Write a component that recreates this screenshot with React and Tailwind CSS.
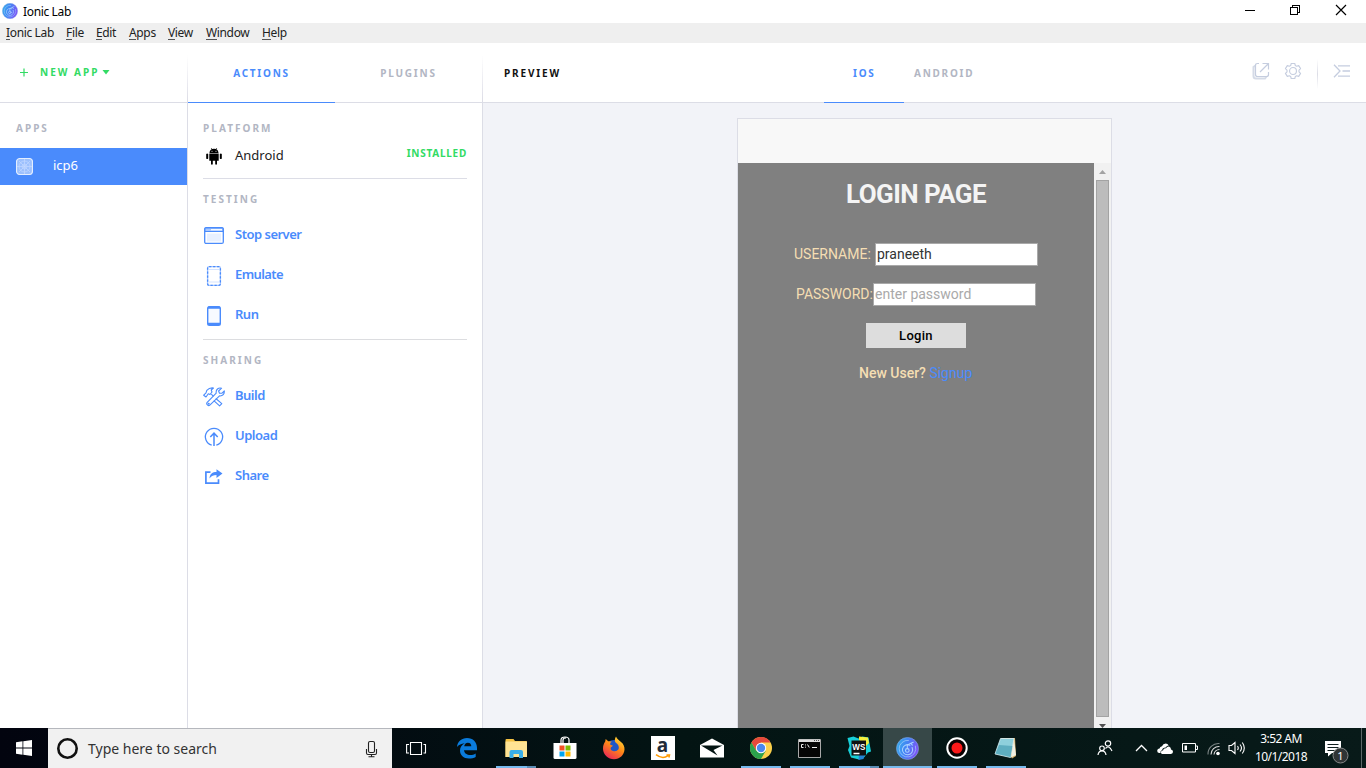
import React from "react";

const LABEL = "text-[10px] leading-[14px] font-bold whitespace-nowrap";

function IonicLogo({ size, id }) {
  return (
    <svg width={size} height={size} viewBox="0 0 24 24">
      <defs>
        <linearGradient id={id} x1="0" y1="0" x2="1" y2="0.3">
          <stop offset="0" stopColor="#36b5e8" />
          <stop offset="0.5" stopColor="#4285f4" />
          <stop offset="1" stopColor="#7a55f5" />
        </linearGradient>
      </defs>
      <circle cx="12" cy="12" r="11.500" fill={`url(#${id})`} stroke="#86a8e8" strokeWidth="0.600" />
      <g fill="none" stroke="#a9d2ff" strokeLinecap="round">
        <path d="M13 3.500A8.700 8.700 0 1 0 20.300 9.500" strokeWidth="0.700" />
        <path d="M14.500 8.600A5.300 5.300 0 1 0 16.800 11" strokeWidth="1.100" />
        <circle cx="11.800" cy="14" r="1.900" strokeWidth="1.200" />
        <path d="M11.800 12V8.500L15.500 6.500L18 5.500M15.500 6.500L17 8.500" strokeWidth="1.100" />
      </g>
    </svg>
  );
}

const MENU = [
  ["Ionic Lab", "w-[60px]"],
  ["File", "w-[30px]"],
  ["Edit", "w-[33px]"],
  ["Apps", "w-[39px]"],
  ["View", "w-[38px]"],
  ["Window", "w-[56px]"],
  ["Help", "w-[40px]"],
];

function TitleBar() {
  return (
    <div className="flex h-[23px] items-start bg-white">
      <div className="pt-[3px] pl-[2px]">
        <IonicLogo size={16} id="logoTitle" />
      </div>
      <div className="pt-[3px] pl-[5px] text-[12px] leading-[18px] tracking-[-0.35px] text-black">Ionic Lab</div>
      <svg className="mt-[4px] mr-[18px] ml-auto" width="104" height="14" fill="none" stroke="#000" strokeWidth="1" shapeRendering="crispEdges">
        <path d="M1 6.500h10" />
        <path d="M46.500 3.500h7v7h-7zM48.500 3.500v-2h7v7h-2" />
        <path d="M92 1l10 10M102 1l-10 10" shapeRendering="auto" strokeWidth="1.200" />
      </svg>
    </div>
  );
}

function MenuBar() {
  return (
    <div className="flex h-[20px] bg-[#efefef] pl-[6px] text-[12px] leading-[20px] tracking-[-0.35px] text-[#222]">
      {MENU.map(([t, w]) => (
        <div key={t} className={`${w} flex-none whitespace-nowrap`}>
          <span className="inline-block h-[17px] border-b border-[#555]">{t[0]}</span>
          {t.slice(1)}
        </div>
      ))}
    </div>
  );
}

function FadeLine() {
  return <div className="h-[59px] w-px flex-none bg-gradient-to-b from-white from-20% to-[#dcdce6]" />;
}

function Sidebar() {
  return (
    <div className="flex w-[188px] flex-none flex-col">
      <div className="flex h-[60px] border-b border-[#dcdde6]">
        <div className="flex flex-1 items-start pt-[22px] pl-[20px] text-[#32db64]">
          <svg className="mt-[3px]" width="8" height="9" stroke="#32db64" strokeWidth="1.200">
            <path d="M4 0.500v8M0 4.500h8" />
          </svg>
          <div className={`${LABEL} pl-[12px] tracking-[2px]`}>NEW APP</div>
          <svg className="mt-[5px] ml-[3px]" width="8" height="5" fill="#32db64">
            <path d="M0.500 0h7l-3.500 4.500z" />
          </svg>
        </div>
        <FadeLine />
      </div>
      <div className="flex-1 border-r border-[#dcdde6]">
        <div className={`${LABEL} pt-[18px] pl-[16px] tracking-[2px] text-[#b2b6c3]`}>APPS</div>
        <div className="mt-[13px] flex h-[37px] bg-[#4a8bfc] pt-[10px] pl-[16px] text-white">
          <svg width="17" height="17" viewBox="0 0 17 17" fill="none" stroke="#e4eeff">
            <rect x="0.500" y="0.500" width="16" height="16" rx="3.500" fill="#9cc0fd" strokeWidth="1.200" />
            <g stroke="#c3d9ff" strokeWidth="0.700">
              <circle cx="8.500" cy="8.500" r="5.500" />
              <circle cx="8.500" cy="8.500" r="2.500" />
              <path d="M8.500 1v15M1 8.500h15M3 3l11 11M14 3l-11 11" />
            </g>
          </svg>
          <div className="-mt-[2px] pl-[20px] text-[13px] leading-[18px]">icp6</div>
        </div>
      </div>
    </div>
  );
}

function Icon({ name }) {
  const common = { width: 22, height: 22, viewBox: "0 0 22 22", fill: "none", stroke: "#4a8bfc" };
  switch (name) {
    case "server":
      return (
        <svg {...common}>
          <rect x="1.700" y="2.600" width="18.600" height="15.800" rx="1.500" strokeWidth="1.300" fill="#fff" />
          <path d="M2 3h18v3.500h-18z" fill="#a9c8ff" strokeWidth="1" />
          <path d="M8 4.700h11" stroke="#fff" strokeWidth="1.200" />
          <path d="M4 8.500h14v8h-14z" fill="#e8f0ff" stroke="none" />
        </svg>
      );
    case "emulate":
      return (
        <svg {...common}>
          <rect x="4.600" y="1.600" width="12.800" height="18.800" rx="1.500" strokeWidth="1.300" stroke="#a3c4fe" />
          <rect x="4.600" y="1.600" width="12.800" height="18.800" rx="1.500" strokeWidth="1.300" strokeDasharray="2.200 1.800" />
          <path d="M6 4.500h10M6 17h10" strokeWidth="0.800" stroke="#c9dcff" />
        </svg>
      );
    case "run":
      return (
        <svg {...common}>
          <rect x="4.700" y="1.700" width="12.600" height="18.600" rx="1.800" strokeWidth="1.400" fill="#f7faff" />
          <path d="M5 2.600h12M5 18.900h12" strokeWidth="2.200" />
        </svg>
      );
    case "build":
      return (
        <svg {...common} strokeWidth="1.100" strokeLinejoin="round">
          <path d="M0.700 9.200 L3 6.800 L3.800 4.300 C6 2 8 1.600 10.500 2 L8.200 4 L9 6 L7 8.500 L5.300 7.800 L3 11 Z" />
          <path d="M8.300 8.200 L10.500 10.300 M12.800 12.500 L18.800 17.600 L16.600 19.900 L10.800 14.700" />
          <path d="M18.600 2.200 L15.600 5 L16.500 7.200 L18.800 7.300 L21.300 4.800 C21.600 8 19.800 10.200 16.500 9.900 L6.800 19.200 C5.400 20.500 2.700 18.200 4.200 16.400 L13.200 7.200 C12.600 3.600 15.400 1.200 18.600 2.200 Z" />
          <circle cx="5.700" cy="17.800" r="0.500" />
        </svg>
      );
    case "upload":
      return (
        <svg {...common} strokeWidth="1.250">
          <path d="M8.700 19.200a8.600 8.600 0 1 1 4.600 0" />
          <path d="M11 20V7.200M7.300 11L11 7.200l3.700 3.800" strokeWidth="1.500" />
        </svg>
      );
    default:
      return (
        <svg {...common} strokeWidth="1.700">
          <path d="M7.500 6.100h-4.600v11h12.600v-3.800" />
          <path d="M6.500 12.500c0.300-4.800 3-6.500 7-6.500V3.200l6 4.400-6 4.300V9c-3 0-5 0.800-7 3.500z" fill="#4a8bfc" stroke="none" />
        </svg>
      );
  }
}

function Action({ icon, label, spacing }) {
  return (
    <div className="flex h-[40px] items-start">
      <div className="pt-[8px]"><Icon name={icon} /></div>
      <div className={`pt-[7px] pl-[10px] text-[13px] leading-[20px] font-semibold text-[#4a8bfc] ${spacing}`}>{label}</div>
    </div>
  );
}

function Actions() {
  const heading = `${LABEL} tracking-[2.05px] text-[#b2b6c3]`;
  return (
    <div className="flex w-[295px] flex-none flex-col">
      <div className="flex h-[60px] border-b border-[#dcdde6]">
        <div className={`${LABEL} -mb-px flex w-[147px] justify-center border-b border-[#4a8bfc] pt-[23px] tracking-[1.75px] text-[#4a8bfc]`}>ACTIONS</div>
        <div className={`${LABEL} flex w-[147px] justify-center pt-[23px] tracking-[1.75px] text-[#b2b6c3]`}>PLUGINS</div>
        <FadeLine />
      </div>
      <div className="flex-1 border-r border-[#dcdde6] pr-[15px] pl-[15px]">
        <div className={`${heading} pt-[18px]`}>PLATFORM</div>
        <div className="flex h-[44px] items-start border-b border-[#dcdde6]">
          <svg className="mt-[13px] ml-[3px]" width="16" height="17" viewBox="0 0 16 17" fill="#000">
            <path d="M3.500 5C3.600 3 4.600 1.900 5.700 1.300L4.800 0.200 5.200 0l1.100 1.100a5 5 0 0 1 3.400 0L10.800 0l0.400 0.200-0.900 1.100c1.200 0.600 2.100 1.800 2.200 3.700z" />
            <path d="M3.300 5.400h9.400v7.400h-1.700v3.500q-0.900 0.800-1.800 0v-3.500h-2.400v3.500q-0.900 0.800-1.800 0v-3.500h-1.700zM0.200 6q1-1.200 2 0v4.500q-1 1-2 0zM13.800 6q1-1.200 2 0v4.500q-1 1-2 0z" />
            <circle cx="6" cy="3.300" r="0.500" fill="#fff" />
            <circle cx="10" cy="3.300" r="0.500" fill="#fff" />
          </svg>
          <div className="pt-[10px] pl-[13px] text-[13px] leading-[20px] text-[#222]">Android</div>
          <div className={`${LABEL} ml-auto pt-[11px] tracking-[0.75px] text-[#32db64]`}>INSTALLED</div>
        </div>
        <div className={`${heading} pt-[13px] pb-[11px]`}>TESTING</div>
        <Action icon="server" label="Stop server" spacing="tracking-[-0.5px]" />
        <Action icon="emulate" label="Emulate" spacing="tracking-[-0.6px]" />
        <Action icon="run" label="Run" spacing="tracking-[-0.5px]" />
        <div className="mt-[2px] h-px bg-[#dcdde0]" />
        <div className={`${heading} pt-[13px] pb-[11px]`}>SHARING</div>
        <Action icon="build" label="Build" spacing="tracking-[-0.5px]" />
        <Action icon="upload" label="Upload" spacing="tracking-[-0.5px]" />
        <Action icon="share" label="Share" spacing="tracking-[-0.5px]" />
      </div>
    </div>
  );
}

function LoginPage() {
  return (
    <div className="flex flex-1 flex-col bg-[#808080] font-['Roboto',sans-serif] text-[14px] text-[#f5deb3]">
      <h1 className="pt-[16px] text-center text-[26px] leading-[30px] font-bold tracking-[-0.55px] text-[#f4f4f4]">LOGIN PAGE</h1>
      <div className="mt-[34px] flex h-[23px] pl-[56px]">
        <div className="w-[81px] leading-[23px]">USERNAME:</div>
        <div className="w-[163px] border border-[#a9a9a9] bg-white pl-px leading-[21px] text-[#333]">praneeth</div>
      </div>
      <div className="mt-[17px] flex h-[23px] pl-[58px]">
        <div className="w-[77px] leading-[23px] whitespace-nowrap">PASSWORD:</div>
        <div className="w-[163px] border border-[#a9a9a9] bg-white pl-px leading-[21px] text-[#a9a9a9]">enter password</div>
      </div>
      <div className="mt-[17px] ml-[128px] h-[25px] w-[100px] bg-[#dddddd] text-center text-[13px] leading-[25px] font-medium tracking-[0.3px] text-black">Login</div>
      <div className="mt-[15px] pl-[121px] leading-[20px] font-medium">
        New User? <span className="font-normal text-[#4a8bfc]">Signup</span>
      </div>
    </div>
  );
}

function Preview() {
  return (
    <div className="flex min-w-0 flex-1 flex-col bg-[#f2f3f8]">
      <div className="flex h-[60px] flex-none border-b border-[#dcdde6] bg-white">
        <div className={`${LABEL} w-[341px] pt-[23px] pl-[21px] tracking-[1.85px] text-[#111]`}>PREVIEW</div>
        <div className={`${LABEL} -mb-px w-[80px] border-b border-[#4a8bfc] pt-[23px] pl-[29px] tracking-[1.75px] text-[#4a8bfc]`}>IOS</div>
        <div className={`${LABEL} pt-[23px] pl-[10px] tracking-[1.75px] text-[#b2b6c3]`}>ANDROID</div>
        <div className="mr-[16px] ml-auto flex items-start pt-[16px]">
          <svg className="mt-[3px]" width="18" height="18" fill="none" stroke="#c5cddf" strokeWidth="1.200">
            <path d="M3.500 3.500L1.500 5v9q0 2.500 2.500 2.500h9l1.500-2" stroke="#d5dbe7" strokeWidth="2" />
            <path d="M7 1.500H5.500q-2 0-2 2v9q0 2 2 2h9q2 0 2-2V10M8 10l8-8M10.500 1.500h6v6" />
          </svg>
          <svg className="mt-[3px] ml-[14px]" width="18" height="18" viewBox="0 0 24 24" fill="none" stroke="#c5cddf" strokeWidth="1.500" strokeLinejoin="round">
            <path d="M9.600 2h4.800l.7 2.800 1.700.9 2.800-.9 2.500 4-2.100 2v2.400l2.100 2-2.500 4-2.800-.9-1.700.9-.7 2.800H9.600l-.7-2.800-1.700-.9-2.800.9-2.500-4 2.100-2v-2.400l-2.100-2 2.500-4 2.800.9 1.700-.9z" />
            <circle cx="12" cy="12" r="4.600" />
          </svg>
          <div className="ml-[15px] h-[30px] w-px bg-gradient-to-b from-white via-[#dcdde6] to-white" />
          <svg className="mt-[5px] ml-[15px]" width="17" height="14" fill="none" stroke="#c5cddf" strokeWidth="1.300">
            <path d="M1 0.700l6 6.300-6 6.300M5 1.800h12M9.500 7H17M5 12.200h12" />
          </svg>
        </div>
      </div>
      <div className="ml-[254px] flex min-h-0 w-[375px] flex-1 flex-col pt-[15px]">
        <div className="flex flex-1 flex-col border border-b-0 border-[#dcdde6] bg-[#f8f8f8]">
          <div className="h-[44px] flex-none" />
          <div className="flex flex-1">
            <LoginPage />
            <div className="flex w-[17px] flex-col items-center bg-[#f1f1f1]">
              <svg className="flex-none" width="17" height="17" fill="#a3a3a3"><path d="M5 11l3.500-4 3.500 4z" /></svg>
              <div className="h-[537px] w-[13px] border border-[#a3a3a3] bg-[#bcbcbc]" />
              <svg className="mt-[7px] flex-none" width="17" height="4" fill="#505050"><path d="M5 0h7l-3.500 4z" /></svg>
            </div>
          </div>
        </div>
      </div>
    </div>
  );
}

function Task({ line, tail, active, children }) {
  return (
    <div className={`flex h-[40px] w-[49px] flex-none flex-col items-center ${active ? "bg-[#374848]" : ""}`}>
      <div className="flex h-[38px] items-center justify-center pt-[2px]">{children}</div>
      {line && (
        <div className={`flex h-[2px] bg-[#76b9ed] ${active ? "w-full" : "w-[40px]"}`}>
          {tail && <div className="ml-auto w-[9px] bg-[#5a8cb4]" />}
        </div>
      )}
    </div>
  );
}

function Taskbar() {
  return (
    <div className="flex h-[40px] flex-none bg-gradient-to-r from-[#02040f] via-[#031413] to-[#081a19] text-white">
      <div className="flex w-[48px] flex-none items-center justify-center">
        <svg width="16" height="16" fill="#fff"><path d="M0 2.200L6.500 1.300v6.200H0zM7.300 1.200L16 0v7.500H7.300zM0 8.400h6.500v6.300L0 13.800zM7.300 8.400H16V16L7.300 14.800z" /></svg>
      </div>
      <div className="flex w-[344px] flex-none items-center border-t border-[#b5b7bd] bg-[#f1f1f1]">
        <svg className="ml-[8px]" width="23" height="23"><circle cx="11.500" cy="11.500" r="9.200" fill="none" stroke="#111" strokeWidth="2.600" /></svg>
        <div className="pl-[9px] text-[14px] leading-[20px] text-[#333]">Type here to search</div>
        <svg className="mr-[14px] ml-auto" width="13" height="18" fill="none" stroke="#222" strokeWidth="1.100">
          <rect x="3.500" y="1.500" width="6" height="11" rx="1.500" />
          <path d="M1.500 9v4q0 1.500 1.500 1.500h7q1.500 0 1.500-1.500V9M6.500 15v2M3.500 16.800h6" />
        </svg>
      </div>
      <div className="flex w-[50px] flex-none items-center pl-[14px]">
        <svg width="21" height="15" fill="none" stroke="#fff" strokeWidth="1.100"><path d="M4.500 1.500h11v12h-11zM3 3.500H0.600v8.500H3M17.500 3.500h2v8.500h-2" /></svg>
      </div>
      <Task>
        <svg width="22" height="22" viewBox="0 0 22 22" fill="#0a7bdc">
          <path d="M1 10C1.500 4.500 5.500 1 11 1c6 0 10 4 10 10v2.200H8c0.300 3.200 3 4.700 6.300 4.700 2 0 3.700-0.500 5.400-1.500V20c-1.900 1-4.300 1.500-6.800 1.500-5.400 0-8.900-3.300-8.900-8 0-3.200 1.800-5.900 4.800-7.200C5.300 6.600 2.700 7.800 1 10zM8.200 9.300h7.100c0-2-1-3.600-3.400-3.600-2.200 0-3.400 1.500-3.700 3.600z" />
        </svg>
      </Task>
      <Task line tail>
        <svg width="22" height="19" viewBox="0 0 22 19">
          <path d="M0.500 1q0-1 1-1h7l1.500 2h11q1 0 1 1v15h-21.500z" fill="#f5c243" />
          <path d="M0.500 2.500h21.500v15.500h-21.500z" fill="#ffe394" />
          <path d="M4.500 19v-6q0-2 2-2h9.500q2 0 2 2v6h-4v-4h-5.500v4z" fill="#3aaee8" />
        </svg>
      </Task>
      <Task>
        <svg width="24" height="24" viewBox="0 0 24 24">
          <path d="M8 7V4q0-3 4-3t4 3v3M10 7V4q0-2 3-2" stroke="#fff" fill="none" strokeWidth="1.200" />
          <path d="M0.500 7h23v14.500q0 1.500-1.500 1.500H2q-1.500 0-1.500-1.500z" fill="#fff" />
          <path d="M6.500 9.500h5v5h-5z" fill="#f25022" /><path d="M12.500 9.500h5v5h-5z" fill="#7fba00" />
          <path d="M6.500 15.500h5v5h-5z" fill="#00a4ef" /><path d="M12.500 15.500h5v5h-5z" fill="#ffb900" />
        </svg>
      </Task>
      <Task>
        <svg width="24" height="24" viewBox="0 0 24 24">
          <defs><linearGradient id="fox" x1="0.800" y1="0" x2="0.200" y2="1"><stop offset="0" stopColor="#ffde3b" /><stop offset="0.450" stopColor="#ff8a16" /><stop offset="1" stopColor="#e9205c" /></linearGradient></defs>
          <circle cx="12" cy="12.500" r="8.500" fill="#2057c7" />
          <path d="M14 0.500c1 2.500 3 3.500 5 5.500 2.500 2 3.700 4.600 3.500 7.500-0.300 5.500-4.700 9.700-10.500 9.700S1.200 18.700 1 12.900c0-2.900 0.600-5 2.200-7.300l0.500-2.600 2.500 2.200c1.200-0.200 2.500 0 3.800 0.600-1.700 0.800-2 1.700-1.700 3l2.700 1-2.200 1.700c-0.500 1.500 0.200 3 2.200 3.500 2.800 0.600 4-0.200 5.500-1.700 1.300-3-1-5.300-2.700-6.500-1.500-1.500-1.200-4 0.200-6.300z" fill="url(#fox)" />
        </svg>
      </Task>
      <Task>
        <div className="flex h-[24px] w-[24px] flex-col items-center bg-white">
          <div className="h-[18px] text-[19px] leading-[18px] font-bold text-[#222b38]">a</div>
          <svg width="16" height="5" fill="none" stroke="#f90" strokeWidth="1.500"><path d="M1 0.700q6.500 5 12 1M11.500 1h3l-0.600 2.500" /></svg>
        </div>
      </Task>
      <Task>
        <svg width="24" height="20"><path d="M0 7L12 0.500 24 7v12.500H0z" fill="#fff" /><path d="M1 7.500h21.500L13.500 12l4 5.500z" fill="#031413" /></svg>
      </Task>
      <Task line>
        <svg width="22" height="22" viewBox="0 0 22 22">
          <circle cx="11" cy="11" r="11" fill="#fbd04b" />
          <path d="M1.470 5.500A11 11 0 0 1 20.530 5.500H11L6.240 13.700z" fill="#e5493b" />
          <path d="M1.470 5.500L6.240 13.750L15.760 13.750L11 22A11 11 0 0 1 1.470 5.500z" fill="#2ba24c" />
          <circle cx="11" cy="11" r="5.200" fill="#fff" /><circle cx="11" cy="11" r="4.200" fill="#4a88ee" />
        </svg>
      </Task>
      <Task line>
        <svg width="23" height="19">
          <path d="M0.500 0.500h22v18h-22z" fill="#050505" stroke="#a8a8a8" /><path d="M1 0.500h21v2.500H1z" fill="#ddd" />
          <path d="M16 1.500h5" stroke="#555" strokeDasharray="1 1" />
          <path d="M5.500 5.500H3.500v3h2M7.500 5.500v0.900M7.500 7.700v0.900M9.500 5.500l1.800 3M14 8.500h5" stroke="#eee" fill="none" />
        </svg>
      </Task>
      <Task line tail>
        <svg width="24" height="24" viewBox="0 0 24 24">
          <path d="M0.500 2l6-1.500 5 2 4-2 6 1 1 6 1.500 8-3 1-4 5-5 2-8-2L1 14l1.500-4z" fill="#18cfd8" />
          <path d="M12 0.500l9 1 1 5.500-3 3-7-6z" fill="#f4ee3c" /><path d="M12 18h6l-1.500 5-5 1z" fill="#2384d6" />
          <path d="M4.500 4.500h14.500v15h-14.500z" fill="#111" /><path d="M6.500 17.500h6" stroke="#fff" strokeWidth="1.500" />
          <text x="5.300" y="13.500" fill="#fff" fontSize="9" fontWeight="700" fontFamily="Liberation Sans, sans-serif" textLength="13" lengthAdjust="spacingAndGlyphs">WS</text>
        </svg>
      </Task>
      <Task line active><IonicLogo size={23} id="logoTask" /></Task>
      <Task line>
        <svg width="22" height="22"><circle cx="11" cy="11" r="9.700" fill="#0a0202" stroke="#fff" strokeWidth="2" /><circle cx="11" cy="11" r="5.500" fill="#fb1919" /></svg>
      </Task>
      <Task line>
        <svg width="24" height="22">
          <path d="M7 1l14 0 1 18-4 2.500z" fill="#d8b36a" />
          <path d="M6.500 1.500h13.500l-3.500 19L1 17z" fill="#8ed0dc" stroke="#d8eff2" strokeWidth="0.800" />
          <path d="M5 8l13.500 1-2 11L1.500 16.500z" fill="#5eaec0" /><path d="M20 2l2 16-5 2.500z" fill="#f0f0e4" />
        </svg>
      </Task>
      <div className="ml-auto flex w-[269px] flex-none items-center">
        <svg width="17" height="18" fill="none" stroke="#fff" strokeWidth="1.200">
          <circle cx="11" cy="4.500" r="2.700" /><path d="M8.500 9.500q2.500-3 5 0l1.500 2.500" /><circle cx="5" cy="9.300" r="2.300" /><path d="M1 16q0.500-4.200 4-4.200T9 16" />
        </svg>
        <svg className="ml-[21px]" width="13" height="8" fill="none" stroke="#fff" strokeWidth="1.300"><path d="M1 7l5.500-5.500L12 7" /></svg>
        <svg className="ml-[9px]" width="16" height="11" fill="#fff"><path d="M3.500 10H2Q0 9.500 0.200 7.500 0.500 5.700 2.500 5.500 3 3.500 5 3.300 6 0.600 8.700 0.600q2 0 3 1.900-2 0-3 2-3.300-0.300-3.700 2.500Q3 8 3.500 10z" /><path d="M5 11q-1.300-0.500-1-2 0.400-1.500 2-1.400Q6.500 5 9 5.200 10.500 3 12.400 3.700 14 4.500 14 6.500q2 0.500 2 2.300T14 11z" /></svg>
        <svg className="ml-[9px]" width="16" height="10" fill="none" stroke="#fff"><path d="M0.500 0.500h13v8.500h-13zM14 3h1.500v3.500H14" /><path d="M2.500 2.500h2.500v4.500h-2.500z" fill="#fff" stroke="none" /></svg>
        <svg className="ml-[9px] mt-[2px]" width="14" height="14" fill="none" strokeWidth="1.100"><path d="M1 12.500A10.500 10.500 0 0 1 12.500 1.500" stroke="#7b8585" /><path d="M4 12.500A8 8 0 0 1 12.500 4.500M7 12.500a5.500 5.500 0 0 1 5.500-5" stroke="#ddd" /><circle cx="11" cy="11.500" r="1.800" fill="#fff" /></svg>
        <svg className="ml-[7px]" width="18" height="14" fill="none" stroke="#fff" strokeWidth="1.100"><path d="M1 4.500h2.500L7 1.500v11L3.500 9.500H1zM9.500 5q1.500 2 0 4M12 3.500q3 3.500 0 7M14.300 1.500q4 5.500 0 11" /></svg>
        <div className="ml-[5px] w-[60px] text-center text-[12px] leading-[18px] tracking-[-0.55px] whitespace-nowrap">
          <div>3:52 AM</div>
          <div>10/1/2018</div>
        </div>
        <svg className="mt-[9px] ml-[13px]" width="26" height="25">
          <path d="M1 1h16v12H8l-4 3.500V13H1z" fill="#fff" /><path d="M3.500 4.500h11M3.500 7.500h11M3.500 10.500h7" stroke="#10201f" />
          <circle cx="16.500" cy="15.500" r="7.500" fill="#303536" stroke="#858888" />
          <text x="16.500" y="19.500" textAnchor="middle" fill="#fff" fontSize="11" fontFamily="Noto Sans, sans-serif">1</text>
        </svg>
        <div className="mr-[4px] ml-auto h-[40px] w-px bg-[#5c6868]" />
      </div>
    </div>
  );
}

export default function App() {
  return (
    <div className="flex h-[768px] w-[1366px] flex-col overflow-hidden bg-white font-['Noto_Sans',sans-serif]">
      <TitleBar />
      <MenuBar />
      <div className="flex min-h-0 flex-1">
        <Sidebar />
        <Actions />
        <Preview />
      </div>
      <Taskbar />
    </div>
  );
}
